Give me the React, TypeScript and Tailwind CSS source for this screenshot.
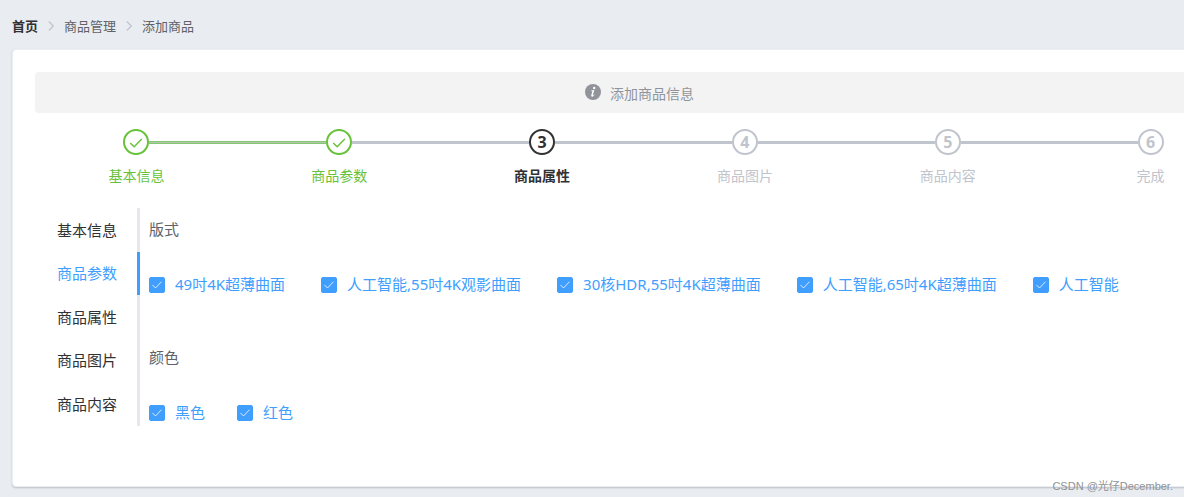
import React from 'react';

type StepStatus = 'success' | 'process' | 'wait';

const breadcrumbs = ['首页', '商品管理', '添加商品'];

const steps: { title: string; status: StepStatus }[] = [
  { title: '基本信息', status: 'success' },
  { title: '商品参数', status: 'success' },
  { title: '商品属性', status: 'process' },
  { title: '商品图片', status: 'wait' },
  { title: '商品内容', status: 'wait' },
  { title: '完成', status: 'wait' }
];

const tabs = ['基本信息', '商品参数', '商品属性', '商品图片', '商品内容'];

const attributes = [
  {
    label: '版式',
    gap: 'gap-9',
    options: [
      '49吋4K超薄曲面',
      '人工智能,55吋4K观影曲面',
      '30核HDR,55吋4K超薄曲面',
      '人工智能,65吋4K超薄曲面',
      '人工智能'
    ]
  },
  { label: '颜色', gap: 'gap-8', options: ['黑色', '红色'] }
];

const statusText: Record<StepStatus, string> = {
  success: 'text-[#67c23a]',
  process: 'text-[#303133] font-bold',
  wait: 'text-[#c0c4cc]'
};

// the line is green only between two finished steps
const lineClass = (from?: StepStatus, to?: StepStatus) => {
  if (!from || !to) return 'bg-transparent';
  if (from === 'success' && to === 'success') return 'bg-[#b2c4ae] border-y border-[#85c873]';
  return 'bg-[#c0c4cc]';
};

const Breadcrumb = () => (
  <nav className="px-3 pt-[15px] pb-3">
    <ol className="flex items-center text-[13px] leading-[22px] text-[#606266]">
      {breadcrumbs.map((name, index) => (
        <li key={name} className="flex items-center">
          {index > 0 && (
            <svg className="w-[6px] h-[10px] mx-[10px]" viewBox="0 0 6 10" fill="none" stroke="#c0c4cc" strokeWidth="1.2">
              <path d="M0.8 0.5L5.3 5L0.8 9.5" />
            </svg>
          )}
          <a href="#" className={index === 0 ? 'font-bold text-[#303133]' : ''}>{name}</a>
        </li>
      ))}
    </ol>
  </nav>
);

const InfoAlert = () => (
  <div role="alert" className="h-[41px] rounded bg-[#f3f3f4] flex items-center justify-center gap-[9px] pr-2 text-[#909399]">
    <svg className="w-4 h-4 mb-0.5" viewBox="0 0 16 16">
      <circle cx="8" cy="8" r="8" fill="#909399" />
      <circle cx="9.2" cy="4" r="1.2" fill="#fff" />
      <path d="M6.2 6.6Q7.8 6.3 9.3 6.1L8 10.8Q7.8 11.7 8.3 11.4L9.3 10.4L9.7 10.7Q8.2 12.9 6.9 12.7Q5.9 12.4 6.3 11L7.3 7.5Q7.4 7 6.1 7Z" fill="#fff" />
    </svg>
    <span className="text-sm pt-0.5">添加商品信息</span>
  </div>
);

const StepBar = () => (
  <ol className="grid grid-cols-6 mt-4">
    {steps.map((step, index) => (
      <li key={step.title} className={`flex flex-col items-center ${statusText[step.status]}`}>
        <div className="flex items-center w-full">
          <span className={`flex-1 h-[3px] ${lineClass(steps[index - 1]?.status, step.status)}`} />
          <span className="w-[26px] h-[26px] rounded-full border-2 border-current flex items-center justify-center text-base leading-none font-bold">
            {step.status === 'success' ? (
              <svg className="w-[14px] h-[14px] mt-0.5" viewBox="0 0 14 14" fill="none" stroke="currentColor" strokeWidth="1.5">
                <path d="M1.2 7L5.2 10.8L12.8 3" />
              </svg>
            ) : (
              index + 1
            )}
          </span>
          <span className={`flex-1 h-[3px] ${lineClass(step.status, steps[index + 1]?.status)}`} />
        </div>
        <span className="text-sm leading-[42px]">{step.title}</span>
      </li>
    ))}
  </ol>
);

const OptionCheckbox = ({ label }: { label: string }) => (
  <label className="flex items-center gap-[10px] whitespace-nowrap text-[#409eff]">
    <span className="grid w-4 h-4">
      <input
        type="checkbox"
        defaultChecked
        className="peer appearance-none col-start-1 row-start-1 w-4 h-4 rounded-xs border border-[#dcdfe6] bg-white checked:border-[#409eff] checked:bg-[#409eff]"
      />
      <svg className="hidden peer-checked:block pointer-events-none col-start-1 row-start-1 w-4 h-4" viewBox="0 0 16 16" fill="none" stroke="#d9ecff" strokeWidth="1">
        <path d="M3.5 8L6.5 11L12.5 4.7" />
      </svg>
    </span>
    {label}
  </label>
);

export default function App() {
  return (
    <div className="relative min-h-screen overflow-hidden bg-[#e9edf2] pb-[10px] font-['Noto_Sans','Noto_Sans_CJK_SC',sans-serif]">
      <Breadcrumb />

      {/* the card is wider than the window and runs off its right edge */}
      <main className="ml-3 -mr-[91px] rounded border border-[#ebeef5] bg-white px-[22px] pt-[22px] pb-[22px] shadow-[0_1px_2px_rgba(0,0,0,0.2)]">
        <InfoAlert />
        <StepBar />

        <div className="flex items-start mt-[11px] text-[15px]">
          <div role="tablist" className="grid grid-rows-5 w-[105px] h-[218px] text-[#303133]">
            {tabs.map((tab, index) => (
              <button
                key={tab}
                type="button"
                role="tab"
                aria-selected={index === 1}
                className={`pl-[22px] text-left border-r-3 ${
                  index === 1 ? 'border-[#409eff] text-[#409eff]' : 'border-[#e4e7ed]'
                }`}
              >
                {tab}
              </button>
            ))}
          </div>

          <div className="flex-1 pl-[9px] text-[#606266]">
            {attributes.map((attribute) => (
              <fieldset key={attribute.label} className="h-32">
                <legend className="h-11 leading-[43px]">{attribute.label}</legend>
                <div className={`flex h-[65px] items-center ${attribute.gap}`}>
                  {attribute.options.map((option) => (
                    <OptionCheckbox key={option} label={option} />
                  ))}
                </div>
              </fieldset>
            ))}
          </div>
        </div>
      </main>

      <span className="absolute right-[11px] bottom-[3px] text-[11px] leading-4 text-[#8f9296] font-['Liberation_Sans','Noto_Sans_CJK_SC',sans-serif]">
        CSDN @光仔December.
      </span>
    </div>
  );
}
